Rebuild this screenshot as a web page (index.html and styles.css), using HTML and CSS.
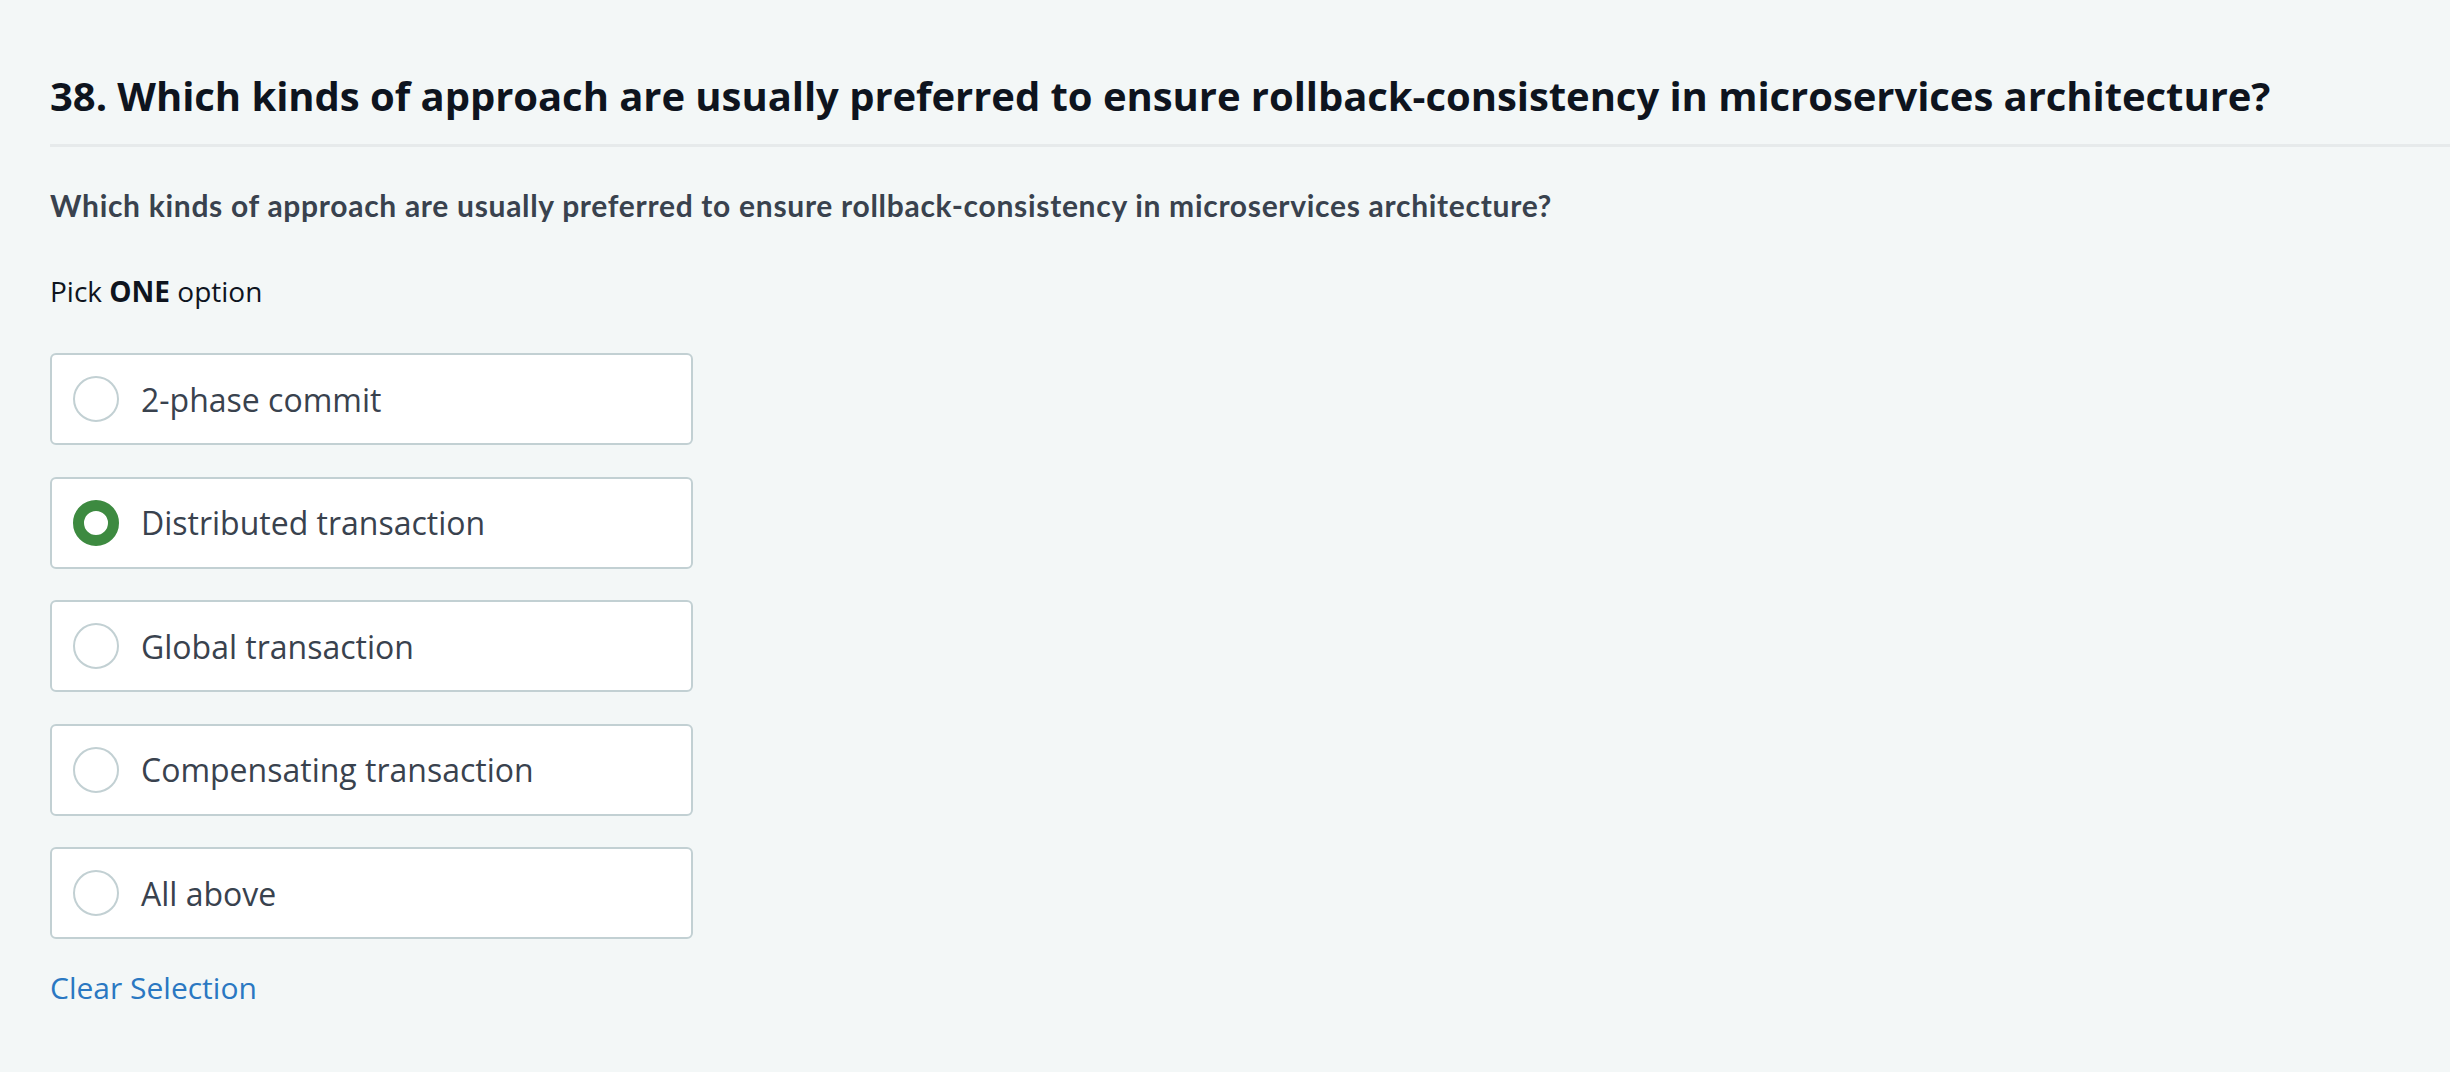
FILE: index.html
```html
<!DOCTYPE html>
<html lang="en">
<head>
<meta charset="utf-8">
<title>Question 38</title>
<link rel="stylesheet" href="styles.css">
</head>
<body>
<main class="page">
  <h1 class="q-title">38. Which kinds of approach are usually preferred to ensure rollback-consistency in microservices architecture?</h1>
  <div class="divider"></div>
  <p class="q-text">Which kinds of approach are usually preferred to ensure rollback-consistency in microservices architecture?</p>
  <p class="hint">Pick <strong>ONE</strong> option</p>
  <div class="options">
    <label class="option"><span class="radio"></span><span class="opt-text">2-phase commit</span></label>
    <label class="option"><span class="radio radio-on"></span><span class="opt-text">Distributed transaction</span></label>
    <label class="option"><span class="radio"></span><span class="opt-text">Global transaction</span></label>
    <label class="option"><span class="radio"></span><span class="opt-text">Compensating transaction</span></label>
    <label class="option"><span class="radio"></span><span class="opt-text">All above</span></label>
  </div>
  <a class="clear" href="#">Clear Selection</a>
</main>
</body>
</html>
```
FILE: styles.css
```css
html, body {
  margin: 0;
  padding: 0;
  background: #f3f7f7;
}
body {
  font-family: "Open Sans", "Noto Sans", sans-serif;
  color: #39424e;
}
.page {
  padding: 71px 0 0 50px;
  display: flex;
  flex-direction: column;
  align-items: flex-start;
}
.q-title {
  margin: 0;
  font-size: 40px;
  line-height: 50px;
  font-weight: 700;
  letter-spacing: -0.05px;
  color: #0e141e;
}
.divider {
  align-self: stretch;
  height: 3px;
  background: #e6eaeb;
  margin-top: 23px;
}
.q-text {
  margin: 39px 0 0;
  font-family: Lato, "Open Sans", sans-serif;
  font-weight: 700;
  font-size: 30px;
  line-height: 39px;
  letter-spacing: 0.7px;
  color: #39424e;
}
.hint {
  margin: 48px 0 0;
  font-size: 28px;
  line-height: 36px;
  color: #0e141e;
}
.hint strong {
  font-weight: 700;
}
.options {
  margin-top: 44px;
  display: flex;
  flex-direction: column;
  gap: 31.5px;
}
.option {
  box-sizing: border-box;
  width: 643px;
  height: 92px;
  display: flex;
  align-items: center;
  gap: 22px;
  padding-left: 21px;
  background: #ffffff;
  border: 2px solid #c2d0d3;
  border-radius: 6px;
}
.radio {
  box-sizing: border-box;
  width: 46px;
  height: 46px;
  border-radius: 50%;
  border: 2px solid #c2d0d3;
  background: #ffffff;
  flex: none;
}
.radio-on {
  border: 11px solid #3d8a40;
}
.opt-text {
  font-size: 32px;
  color: #39424e;
}
.clear {
  margin-top: 30px;
  font-size: 30px;
  line-height: 38px;
  color: #2a78c2;
  text-decoration: none;
}
```
